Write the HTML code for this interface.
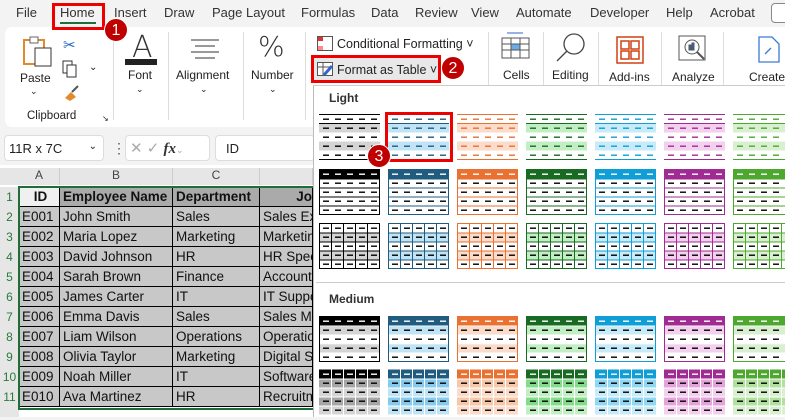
<!DOCTYPE html>
<html><head><meta charset="utf-8"><style>
*{box-sizing:border-box;margin:0;padding:0}
body{width:785px;height:417px;overflow:hidden;background:#f3f3f3;font-family:"Liberation Sans",sans-serif;position:relative;color:#222}
.a{position:absolute}
.tab{position:absolute;top:5px;font-size:13px;color:#333}
.rib{position:absolute;left:5px;top:27px;width:790px;height:100px;background:#fff;border-radius:7px}
.lbl{position:absolute;font-size:12px;color:#222;text-align:center}
.sep{position:absolute;top:32px;width:1px;height:88px;background:#ddd}
.badge{position:absolute;z-index:10;width:24px;height:24px;border-radius:12px;background:#c00000;color:#fff;font-size:16px;text-align:center;line-height:24px;border:1px solid #fff}
.redbox{position:absolute;z-index:9;border:3px solid #e00;}
.grid{position:absolute;left:0;top:165px;width:313px;height:252px;background:#fff}
.ch{position:absolute;top:168px;height:17px;font-size:12px;color:#444;text-align:center;background:#e6e6e6;border-right:1px solid #ccc}
.rn{position:absolute;left:0;width:19px;font-size:12px;color:#2a7a3a;text-align:center;background:#e6e6e6}
.c{position:absolute;height:20px;font-size:13.5px;line-height:20px;padding-left:3px;background:#c8c8c8;border-right:1px solid #000;border-bottom:1px solid #000;white-space:nowrap;overflow:hidden;color:#111}
.panel{position:absolute;left:313px;top:85px;width:472px;height:332px;background:#fff;border-left:1px solid #bbb;border-top:1px solid #ccc}
</style></head><body>
<div class="tab" style="left:16px">File</div>
<div class="tab" style="left:60px;font-weight:normal">Home</div>
<div class="a" style="left:60px;top:22px;width:36px;height:2px;background:#1e6e3a"></div>
<div class="tab" style="left:114px">Insert</div>
<div class="tab" style="left:164px">Draw</div>
<div class="tab" style="left:212px">Page Layout</div>
<div class="tab" style="left:301px">Formulas</div>
<div class="tab" style="left:371px">Data</div>
<div class="tab" style="left:415px">Review</div>
<div class="tab" style="left:471px">View</div>
<div class="tab" style="left:516px">Automate</div>
<div class="tab" style="left:590px">Developer</div>
<div class="tab" style="left:666px">Help</div>
<div class="tab" style="left:710px">Acrobat</div>
<div class="a" style="left:771px;top:3px;width:20px;height:20px;border:1px solid #888;border-radius:4px;background:#fff"></div>
<div class="redbox" style="left:52px;top:3px;width:53px;height:27px"></div>
<div class="badge" style="left:104px;top:18px">1</div>

<div class="rib"></div>
<svg class="a" style="left:22px;top:36px" width="32" height="32"><rect x="2" y="4" width="20" height="24" fill="#fff" stroke="#e38a2c" stroke-width="2"/><rect x="8" y="1" width="8" height="6" fill="#fff" stroke="#666"/><rect x="13" y="12" width="16" height="18" fill="#fff" stroke="#333"/></svg>
<div class="lbl" style="left:20px;top:71px">Paste</div>
<div class="lbl" style="left:30px;top:86px;font-size:9px">⌄</div>
<div class="a" style="left:63px;top:36px;font-size:15px;color:#2266bb">✂</div>
<svg class="a" style="left:62px;top:60px" width="16" height="18"><rect x="1" y="1" width="9" height="12" fill="none" stroke="#333"/><rect x="5" y="5" width="9" height="12" fill="#fff" stroke="#333"/></svg>
<div class="a" style="left:89px;top:62px;font-size:10px">⌄</div>
<svg class="a" style="left:62px;top:84px" width="18" height="18"><path d="M3 14 L9 8 L14 13 L8 17Z" fill="#e38a2c"/><path d="M10 8 L16 2" stroke="#555" stroke-width="2"/></svg>
<div class="lbl" style="left:27px;top:110px;font-size:11.5px">Clipboard</div>
<div class="a" style="left:102px;top:114px;font-size:8px">↘</div>
<div class="sep" style="left:113px"></div>
<div class="a" style="left:132px;top:30px;font-size:30px;font-family:'DejaVu Sans';font-weight:100;color:#333">A</div>
<div class="a" style="left:125px;top:59px;width:32px;height:6px;background:#222"></div>
<div class="lbl" style="left:128px;top:68px">Font</div>
<div class="lbl" style="left:136px;top:84px;font-size:9px">⌄</div>
<div class="sep" style="left:168px"></div>
<svg class="a" style="left:190px;top:38px" width="30" height="22" stroke="#333"><path d="M1 2H29M5 8H25M1 14H29M5 20H25"/></svg>
<div class="lbl" style="left:176px;top:68px">Alignment</div>
<div class="lbl" style="left:200px;top:84px;font-size:9px">⌄</div>
<div class="sep" style="left:243px"></div>
<div class="a" style="left:258px;top:30px;font-size:28px;color:#333;font-family:'DejaVu Sans';font-weight:100">%</div>
<div class="lbl" style="left:251px;top:68px">Number</div>
<div class="lbl" style="left:269px;top:84px;font-size:9px">⌄</div>
<div class="sep" style="left:305px"></div>
<svg class="a" style="left:317px;top:36px" width="16" height="15"><rect x="0.5" y="0.5" width="15" height="14" fill="#fff" stroke="#555"/><rect x="1" y="1" width="5" height="4" fill="#d33"/><rect x="1" y="10" width="5" height="4" fill="#f88"/></svg>
<div class="a" style="left:337px;top:37px;font-size:12.5px">Conditional Formatting ˅</div>
<div class="a" style="left:312px;top:57px;width:127px;height:24px;background:#e8e8e8"></div>
<svg class="a" style="left:317px;top:62px" width="17" height="15"><rect x="0.5" y="0.5" width="15" height="13" fill="#fff" stroke="#555"/><path d="M0 5H16M6 0V14" stroke="#555"/><path d="M7 13 L15 4" stroke="#36c" stroke-width="3"/></svg>
<div class="a" style="left:337px;top:63px;font-size:12.5px">Format as Table ˅</div>
<div class="redbox" style="left:311px;top:55px;width:130px;height:28px"></div>
<div class="badge" style="left:441px;top:56px">2</div>
<div class="sep" style="left:488px"></div>
<svg class="a" style="left:501px;top:32px" width="30" height="28" stroke="#555" fill="none"><path d="M6 1H22" stroke="#36c"/><rect x="1" y="6" width="27" height="20" fill="#fff"/><rect x="10" y="12" width="9" height="6" fill="#6aabe8" stroke="#36c"/><path d="M1 12H28M1 18H28M10 6V26M19 6V26"/></svg>
<div class="lbl" style="left:503px;top:68px">Cells</div>
<div class="sep" style="left:543px"></div>
<svg class="a" style="left:554px;top:33px" width="34" height="30" fill="none" stroke="#444" stroke-width="1.3"><circle cx="20" cy="11" r="10"/><path d="M13 18 L3 28"/></svg>
<div class="lbl" style="left:552px;top:68px">Editing</div>
<div class="sep" style="left:598px"></div>
<svg class="a" style="left:616px;top:36px" width="28" height="28" fill="none" stroke="#d04010" stroke-width="1.5"><rect x="1" y="1" width="26" height="26"/><rect x="5" y="5" width="8" height="8"/><rect x="15" y="5" width="8" height="8"/><rect x="5" y="15" width="8" height="8"/><rect x="15" y="15" width="8" height="8"/></svg>
<div class="lbl" style="left:609px;top:70px">Add-ins</div>
<div class="sep" style="left:661px"></div>
<svg class="a" style="left:678px;top:35px" width="30" height="28" fill="none" stroke="#555"><rect x="1" y="1" width="26" height="24"/><circle cx="14" cy="12" r="7" fill="#fff"/><path d="M19 17 L26 24" stroke-width="2"/><rect x="11" y="10" width="2" height="5" fill="#36c"/><rect x="14" y="8" width="2" height="7" fill="#36c"/></svg>
<div class="lbl" style="left:672px;top:70px">Analyze</div>
<div class="sep" style="left:723px"></div>
<svg class="a" style="left:757px;top:36px" width="24" height="28" fill="none" stroke="#3a7bd5" stroke-width="1.3"><path d="M2 1H15L22 8V26H2Z"/><path d="M8 18 L14 12"/></svg>
<div class="lbl" style="left:749px;top:70px">Create</div>

<div class="a" style="left:4px;top:135px;width:100px;height:26px;background:#fff;border:1px solid #ddd;border-radius:4px;font-size:13px;padding:5px 4px">11R x 7C<span style="position:absolute;right:6px;font-size:10px">⌄</span></div>
<div class="a" style="left:112px;top:140px;font-size:14px;color:#555">⋮</div>
<div class="a" style="left:125px;top:135px;width:85px;height:26px;background:#fff;border:1px solid #ddd;border-radius:4px;font-size:15px;color:#aaa;padding:3px 4px">✕ ✓ <i style="color:#333;font-family:'Liberation Serif';font-weight:bold">fx</i><span style="font-size:9px">⌄</span></div>
<div class="a" style="left:215px;top:135px;width:100px;height:26px;background:#fff;border:1px solid #ddd;border-radius:4px;font-size:13px;padding:5px 10px">ID</div>

<div class="grid"></div>
<div class="a" style="left:0;top:168px;width:19px;height:17px;background:#e6e6e6"></div>
<div class="ch" style="left:19px;width:41px;top:168px">A</div>
<div class="ch" style="left:60px;width:113px">B</div>
<div class="ch" style="left:173px;width:87px">C</div>
<div class="ch" style="left:260px;width:53px"></div>
<div id="rows"></div>
<div class="a" style="left:18px;top:186px;width:297px;height:224px;border:2px solid #1e6e3a"></div>

<div class="panel"></div>
<div class="a" style="left:329px;top:91px;font-size:12px;font-weight:bold;color:#333">Light</div>
<div class="a" style="left:316px;top:282px;width:469px;height:1px;background:#ccc"></div>
<div class="a" style="left:329px;top:292px;font-size:12px;font-weight:bold;color:#333">Medium</div>
<div id="sw"></div>
<div class="redbox" style="left:385px;top:112px;width:68px;height:50px"></div>
<div class="badge" style="left:367px;top:144px">3</div>

<script>
var d=[["ID","Employee Name","Department","Jo"],["E001","John Smith","Sales","Sales Ex"],["E002","Maria Lopez","Marketing","Marketin"],["E003","David Johnson","HR","HR Spec"],["E004","Sarah Brown","Finance","Account"],["E005","James Carter","IT","IT Suppo"],["E006","Emma Davis","Sales","Sales Ma"],["E007","Liam Wilson","Operations","Operatio"],["E008","Olivia Taylor","Marketing","Digital S"],["E009","Noah Miller","IT","Software"],["E010","Ava Martinez","HR","Recruitm"]];
var xs=[19,60,173,260,313],h="";
for(var r=0;r<11;r++){var y=187+r*20;h+='<div class="rn" style="top:'+y+'px;height:20px;line-height:20px">'+(r+1)+'</div>';
for(var c=0;c<4;c++){var st='left:'+xs[c]+'px;top:'+y+'px;width:'+(xs[c+1]-xs[c])+'px;';
if(r==0){st+='font-weight:bold;'+(c==0?'background:#f0f0f0;text-align:center;':'background:#aaa;')+(c==3?'text-align:right;':'')}
h+='<div class="c" style="'+st+'">'+d[r][c]+'</div>'}}
h+='<div class="rn" style="top:407px;height:10px"></div>';
document.getElementById('rows').innerHTML=h;
var C=[["#000","#d4d4d4","#a6a6a6"],["#1f5c80","#c0e4f5","#86cbed"],["#e97132","#fbdccb","#f7c7a9"],["#196b24","#c1efc3","#82dd8a"],["#0f9ed5","#c8ebf9","#90d7f3"],["#a02b93","#f2d0ee","#e4a3db"],["#4ea72e","#d8f0cf","#b0e19d"]];
function sw(k,col){var D=col[0],L=col[1],M=col[2],s='<svg width="61" height="46">';var rh=9;
function dashes(y,color){var o='';for(var i=0;i<5;i++)o+='<rect x="'+(4+i*12)+'" y="'+y+'" width="6" height="1.4" fill="'+color+'"/>';return o}
function vgrid(c){var o='';for(var i=1;i<5;i++)o+='<rect x="'+(i*12)+'" y="0" width="1" height="46" fill="'+c+'"/>';return o}
for(var r=0;r<5;r++){var y=r*rh+0.5;var fill='#fff',dc=D==="#000"?"#000":D;
if(k==0){if(r%2==1)fill=L;}
if(k==1){if(r==0){fill=D;dc='#fff'}else dc='#000'}
if(k==2){dc='#000';if(r%2==1)fill=L}
if(k==3){if(r==0){fill=D;dc='#fff'}else{dc='#000';if(r%2==1)fill=L}}
if(k==4){if(r==0){fill=D;dc='#fff'}else{dc='#000';fill=r%2==1?M:L}}
s+='<rect x="0" y="'+y+'" width="61" height="'+rh+'" fill="'+fill+'"/>'+dashes(y+4,dc);}
if(k==0){s+='<rect x="0" y="0" width="61" height="1" fill="'+D+'"/><rect x="0" y="9" width="61" height="1" fill="'+D+'"/><rect x="0" y="45" width="61" height="1" fill="'+D+'"/>'}
if(k==1||k==3){for(var r=1;r<5;r++)s+='<rect x="0" y="'+(r*rh+0.5)+'" width="61" height="'+(k==1?1:0.8)+'" fill="'+(k==1?D:'#fff')+'"/>';s+='<rect x="0.5" y="0.5" width="60" height="45" fill="none" stroke="'+D+'"/>'}
if(k==2){for(var r=1;r<5;r++)s+='<rect x="0" y="'+(r*rh+0.5)+'" width="61" height="1" fill="'+D+'"/>';s+=vgrid(D)+'<rect x="0.5" y="0.5" width="60" height="45" fill="none" stroke="'+D+'"/>'}
if(k==4){for(var r=1;r<5;r++)s+='<rect x="0" y="'+(r*rh+0.5)+'" width="61" height="1" fill="#fff"/>';s+=vgrid('#fff')}
return s+'</svg>'}
var o='',rows=[[0,114],[1,169],[2,223],[3,316],[4,369]];
rows.forEach(function(rw){for(var i=0;i<7;i++){o+='<div class="a" style="left:'+(319+i*69)+'px;top:'+rw[1]+'px">'+sw(rw[0],C[i])+'</div>'}});
document.getElementById('sw').innerHTML=o;
</script>
</body></html>
